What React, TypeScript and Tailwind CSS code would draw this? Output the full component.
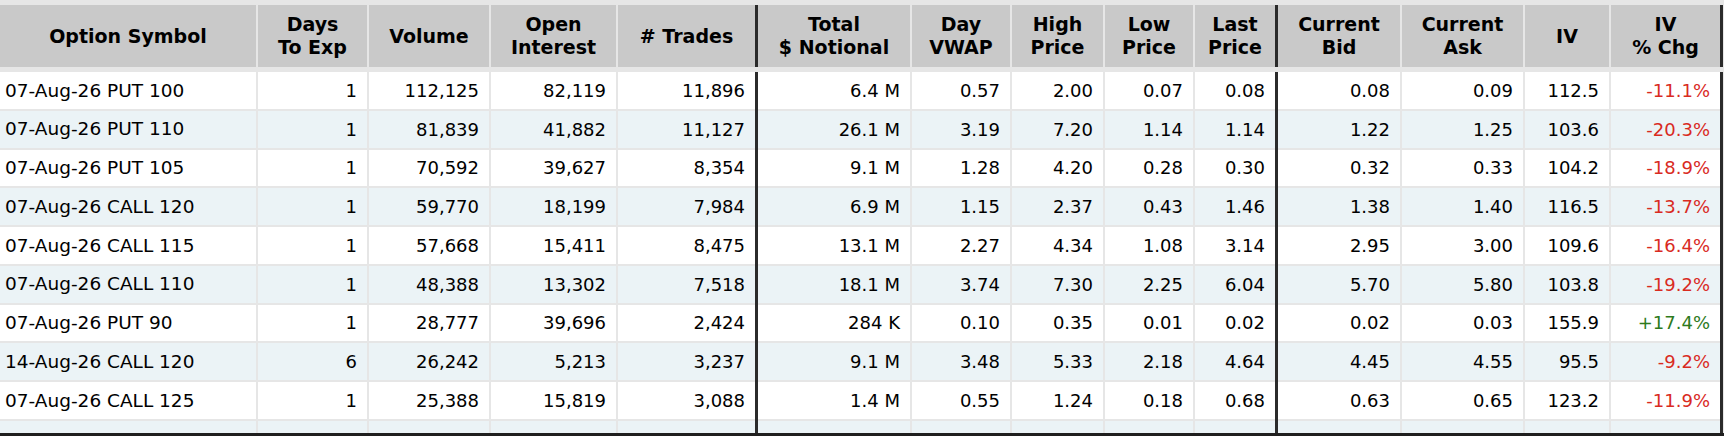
import React from "react";

type Col = { label: string[]; w: string; left?: boolean; darkAfter?: boolean };

const cols: Col[] = [
  { label: ["Option Symbol"], w: "w-[256px]", left: true },
  { label: ["Days", "To Exp"], w: "w-[109px]" },
  { label: ["Volume"], w: "w-[120px]" },
  { label: ["Open", "Interest"], w: "w-[125px]" },
  { label: ["# Trades"], w: "w-[137px]", darkAfter: true },
  { label: ["Total", "$ Notional"], w: "w-[152px]" },
  { label: ["Day", "VWAP"], w: "w-[98px]" },
  { label: ["High", "Price"], w: "w-[91px]" },
  { label: ["Low", "Price"], w: "w-[88px]" },
  { label: ["Last", "Price"], w: "w-[80px]", darkAfter: true },
  { label: ["Current", "Bid"], w: "w-[122px]" },
  { label: ["Current", "Ask"], w: "w-[121px]" },
  { label: ["IV"], w: "w-[84px]" },
  { label: ["IV", "% Chg"], w: "w-[109px]", darkAfter: true },
];

const rows: string[][] = [
  ["07-Aug-26 PUT 100", "1", "112,125", "82,119", "11,896", "6.4 M", "0.57", "2.00", "0.07", "0.08", "0.08", "0.09", "112.5", "-11.1%"],
  ["07-Aug-26 PUT 110", "1", "81,839", "41,882", "11,127", "26.1 M", "3.19", "7.20", "1.14", "1.14", "1.22", "1.25", "103.6", "-20.3%"],
  ["07-Aug-26 PUT 105", "1", "70,592", "39,627", "8,354", "9.1 M", "1.28", "4.20", "0.28", "0.30", "0.32", "0.33", "104.2", "-18.9%"],
  ["07-Aug-26 CALL 120", "1", "59,770", "18,199", "7,984", "6.9 M", "1.15", "2.37", "0.43", "1.46", "1.38", "1.40", "116.5", "-13.7%"],
  ["07-Aug-26 CALL 115", "1", "57,668", "15,411", "8,475", "13.1 M", "2.27", "4.34", "1.08", "3.14", "2.95", "3.00", "109.6", "-16.4%"],
  ["07-Aug-26 CALL 110", "1", "48,388", "13,302", "7,518", "18.1 M", "3.74", "7.30", "2.25", "6.04", "5.70", "5.80", "103.8", "-19.2%"],
  ["07-Aug-26 PUT 90", "1", "28,777", "39,696", "2,424", "284 K", "0.10", "0.35", "0.01", "0.02", "0.02", "0.03", "155.9", "+17.4%"],
  ["14-Aug-26 CALL 120", "6", "26,242", "5,213", "3,237", "9.1 M", "3.48", "5.33", "2.18", "4.64", "4.45", "4.55", "95.5", "-9.2%"],
  ["07-Aug-26 CALL 125", "1", "25,388", "15,819", "3,088", "1.4 M", "0.55", "1.24", "0.18", "0.68", "0.63", "0.65", "123.2", "-11.9%"],
  ["", "", "", "", "", "", "", "", "", "", "", "", "", ""],
];

function Sep({ dark }: { dark?: boolean }) {
  return dark ? (
    <div className="w-[3px] shrink-0 self-stretch bg-[#2b2b2b]" />
  ) : (
    <div className="w-[2px] shrink-0" />
  );
}

function HeaderRow() {
  return (
    <div className="flex h-[62px] shrink-0">
      {cols.map((c, i) => (
        <React.Fragment key={i}>
          <div
            className={`${c.w} shrink-0 h-full bg-[#c9c9c9] flex flex-col items-center justify-center text-center font-bold text-[19px] leading-[23px] text-black`}
          >
            {c.label.map((l, j) => (
              <span key={j} className="whitespace-nowrap">
                {l}
              </span>
            ))}
          </div>
          {i < cols.length - 1 || c.darkAfter ? <Sep dark={c.darkAfter} /> : null}
        </React.Fragment>
      ))}
    </div>
  );
}

function DataRow({ cells, idx }: { cells: string[]; idx: number }) {
  const bg = idx % 2 === 0 ? "bg-white" : "bg-[#ebf3f6]";
  return (
    <div className="flex h-[38.75px] shrink-0 items-start">
      {cols.map((c, i) => {
        const v = cells[i];
        let color = "text-black";
        if (i === 13 && v.startsWith("-")) color = "text-[#d92b1f]";
        if (i === 13 && v.startsWith("+")) color = "text-[#2e7a1c]";
        return (
          <React.Fragment key={i}>
            <div
              className={`${c.w} ${bg} ${color} shrink-0 h-[36.75px] flex items-center whitespace-nowrap ${
                c.left ? "justify-start pl-[5px] text-[18.5px]" : "justify-end pr-[10px] text-[18px]"
              }`}
            >
              {v}
            </div>
            {i < cols.length - 1 || c.darkAfter ? <Sep dark={c.darkAfter} /> : null}
          </React.Fragment>
        );
      })}
    </div>
  );
}

export default function App() {
  return (
    <div
      className="w-[1724px] h-[436px] flex flex-col bg-[#e6e6e6] overflow-hidden"
      style={{ fontFamily: '"DejaVu Sans", Verdana, sans-serif' }}
    >
      <div className="flex-1 min-h-0 overflow-hidden flex flex-col pt-[5px]">
        <HeaderRow />
        <div className="h-[5px] shrink-0" />
        {rows.map((r, i) => (
          <DataRow key={i} cells={r} idx={i} />
        ))}
      </div>
      <div className="h-[3px] shrink-0 bg-[#1f1f1f]" />
    </div>
  );
}
